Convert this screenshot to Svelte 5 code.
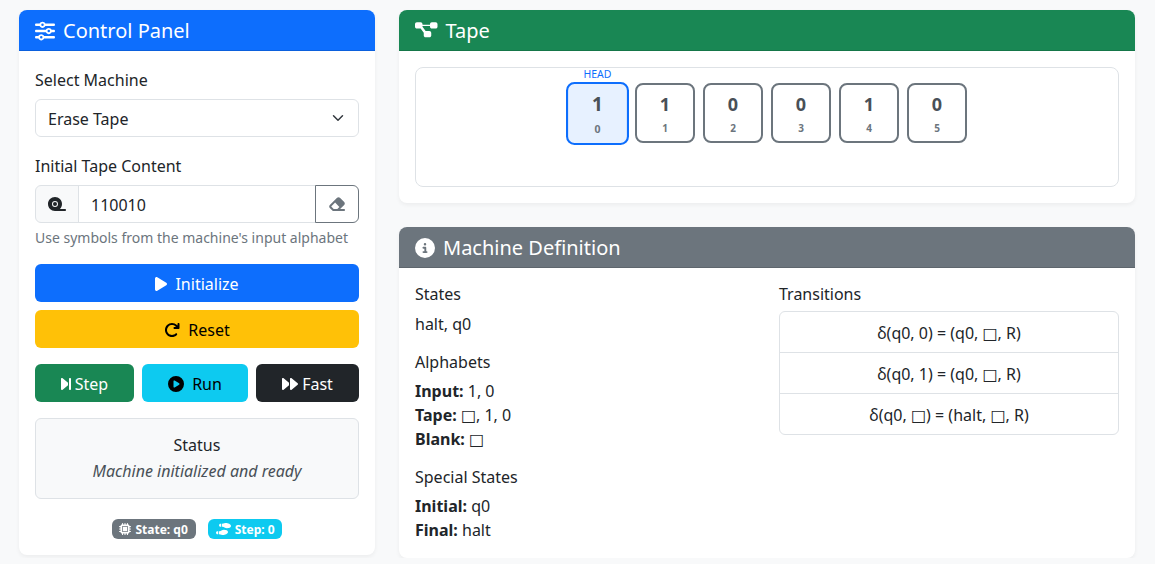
<script>
  const icons = {
    sliders: ['0 0 512 512', 'M0 416c0 17.7 14.3 32 32 32l54.7 0c12.3 28.3 40.5 48 73.3 48s61-19.7 73.3-48L480 448c17.7 0 32-14.3 32-32s-14.3-32-32-32l-246.7 0c-12.3-28.3-40.5-48-73.3-48s-61 19.7-73.3 48L32 384c-17.7 0-32 14.3-32 32zm128 0a32 32 0 1 1 64 0 32 32 0 1 1 -64 0zM320 256a32 32 0 1 1 64 0 32 32 0 1 1 -64 0zm32-80c-32.8 0-61 19.7-73.3 48L32 224c-17.7 0-32 14.3-32 32s14.3 32 32 32l246.7 0c12.3 28.3 40.5 48 73.3 48s61-19.7 73.3-48l54.7 0c17.7 0 32-14.3 32-32s-14.3-32-32-32l-54.7 0c-12.3-28.3-40.5-48-73.3-48zM192 128a32 32 0 1 1 0-64 32 32 0 1 1 0 64zm73.3-64C253 35.7 224.8 16 192 16s-61 19.7-73.3 48L32 64C14.3 64 0 78.3 0 96s14.3 32 32 32l86.7 0c12.3 28.3 40.5 48 73.3 48s61-19.7 73.3-48L480 128c17.7 0 32-14.3 32-32s-14.3-32-32-32L265.3 64z'],
    tape: ['0 0 576 512', 'M380.8 416c41.5-40.7 67.2-97.3 67.2-160C448 132.3 347.7 32 224 32S0 132.3 0 256S100.3 480 224 480H544c17.7 0 32-14.3 32-32s-14.3-32-32-32H380.8zM224 160a96 96 0 1 1 0 192 96 96 0 1 1 0-192zm64 96a64 64 0 1 0 -128 0 64 64 0 1 0 128 0z'],
    eraser: ['0 0 576 512', 'M290.7 57.4L57.4 290.7c-25 25-25 65.5 0 90.5l80 80c12 12 28.3 18.7 45.3 18.7H288h9.4H512c17.7 0 32-14.3 32-32s-14.3-32-32-32H387.9L518.6 285.3c25-25 25-65.5 0-90.5L381.3 57.4c-25-25-65.5-25-90.5 0zM297.4 416H288l-105.4 0-80-80L227.3 211.3 364.7 348.7 297.4 416z'],
    diagram: ['0 0 576 512', 'M0 80C0 53.5 21.5 32 48 32h96c26.5 0 48 21.5 48 48V96H384V80c0-26.5 21.5-48 48-48h96c26.5 0 48 21.5 48 48v64c0 26.5-21.5 48-48 48H432c-26.5 0-48-21.5-48-48V128H192v16c0 1.7-.1 3.4-.3 5L272 256h96c26.5 0 48 21.5 48 48v64c0 26.5-21.5 48-48 48H272c-26.5 0-48-21.5-48-48V304c0-1.7 .1-3.4 .3-5L144 192H48c-26.5 0-48-21.5-48-48V80z'],
    info: ['0 0 512 512', 'M256 512A256 256 0 1 0 256 0a256 256 0 1 0 0 512zM216 336h24V272H216c-13.3 0-24-10.7-24-24s10.7-24 24-24h48c13.3 0 24 10.7 24 24v88h8c13.3 0 24 10.7 24 24s-10.7 24-24 24H216c-13.3 0-24-10.7-24-24s10.7-24 24-24zm40-208a32 32 0 1 1 0 64 32 32 0 1 1 0-64z'],
    play: ['0 0 384 512', 'M73 39c-14.8-9.1-33.4-9.4-48.5-.9S0 62.6 0 80V432c0 17.4 9.4 33.4 24.5 41.9s33.7 8.1 48.5-.9L361 297c14.3-8.7 23-24.2 23-41s-8.7-32.2-23-41L73 39z'],
    redo: ['0 0 512 512', 'M386.3 160H336c-17.7 0-32 14.3-32 32s14.3 32 32 32H464c17.7 0 32-14.3 32-32V64c0-17.7-14.3-32-32-32s-32 14.3-32 32v51.2L414.4 97.6c-87.5-87.5-229.3-87.5-316.8 0s-87.5 229.3 0 316.8s229.3 87.5 316.8 0c12.5-12.5 12.5-32.8 0-45.3s-32.8-12.5-45.3 0c-62.5 62.5-163.8 62.5-226.3 0s-62.5-163.8 0-226.3s163.8-62.5 226.3 0L386.3 160z'],
    step: ['0 0 320 512', 'M52.5 440.6c-9.5 7.9-22.8 9.7-34.1 4.4S0 428.4 0 416V96C0 83.6 7.2 72.3 18.4 67s24.5-3.6 34.1 4.4L224 214.3V256v41.7L52.5 440.6zM256 352V256 128 96c0-17.7 14.3-32 32-32s32 14.3 32 32V416c0 17.7-14.3 32-32 32s-32-14.3-32-32V352z'],
    playCircle: ['0 0 512 512', 'M0 256a256 256 0 1 1 512 0A256 256 0 1 1 0 256zM188.3 147.1c-7.6 4.2-12.3 12.3-12.3 20.9V344c0 8.7 4.7 16.7 12.3 20.9s16.8 4.1 24.3-.5l144-88c7.1-4.4 11.5-12.1 11.5-20.5s-4.4-16.1-11.5-20.5l-144-88c-7.4-4.5-16.7-4.7-24.3-.5z'],
    forward: ['0 0 512 512', 'M52.5 440.6c-9.5 7.9-22.8 9.7-34.1 4.4S0 428.4 0 416V96C0 83.6 7.2 72.3 18.4 67s24.5-3.6 34.1 4.4L224 214.3V256v41.7L52.5 440.6zM256 352V256 128 96c0-12.4 7.2-23.7 18.4-29s24.5-3.6 34.1 4.4l192 160c7.3 6.1 11.5 15.1 11.5 24.6s-4.2 18.5-11.5 24.6l-192 160c-9.5 7.9-22.8 9.7-34.1 4.4s-18.4-16.6-18.4-29V352z'],
    chip: ['0 0 512 512', 'M176 24c0-13.3-10.7-24-24-24s-24 10.7-24 24V64c-35.3 0-64 28.7-64 64H24c-13.3 0-24 10.7-24 24s10.7 24 24 24H64v56H24c-13.3 0-24 10.7-24 24s10.7 24 24 24H64v56H24c-13.3 0-24 10.7-24 24s10.7 24 24 24H64c0 35.3 28.7 64 64 64v40c0 13.3 10.7 24 24 24s24-10.7 24-24V448h56v40c0 13.3 10.7 24 24 24s24-10.7 24-24V448h56v40c0 13.3 10.7 24 24 24s24-10.7 24-24V448c35.3 0 64-28.7 64-64h40c13.3 0 24-10.7 24-24s-10.7-24-24-24H448V280h40c13.3 0 24-10.7 24-24s-10.7-24-24-24H448V176h40c13.3 0 24-10.7 24-24s-10.7-24-24-24H448c0-35.3-28.7-64-64-64V24c0-13.3-10.7-24-24-24s-24 10.7-24 24V64H280V24c0-13.3-10.7-24-24-24s-24 10.7-24 24V64H176V24zM160 128H352c17.7 0 32 14.3 32 32V352c0 17.7-14.3 32-32 32H160c-17.7 0-32-14.3-32-32V160c0-17.7 14.3-32 32-32zm192 32H160V352H352V160z'],
    shoes: ['0 0 640 512', 'M192 160h32V32h-32c-35.35 0-64 28.65-64 64s28.65 64 64 64zM0 416c0 35.35 28.65 64 64 64h32V352H64c-35.35 0-64 28.65-64 64zm337.46-128c-34.91 0-76.16 13.12-104.73 32-24.79 16.38-44.52 32-104.73 32v128l57.53 15.97c26.21 7.28 53.01 13.12 80.31 15.05 32.69 2.31 65.6.67 97.58-6.2C472.9 481.3 512 429.22 512 384c0-64-84.18-96-174.54-96zM491.42 7.19C459.44.32 426.53-1.33 393.84.99c-27.3 1.93-54.1 7.77-80.31 15.04L256 32v128c60.2 0 79.94 15.62 104.73 32 28.57 18.88 69.82 32 104.73 32C555.82 224 640 192 640 128c0-45.22-39.1-97.3-148.58-120.81z']
  };

  const tape = ['1', '1', '0', '0', '1', '0'];
  const transitions = [
    ['δ(q0, 0) = (q0, ', ', R)'],
    ['δ(q0, 1) = (q0, ', ', R)'],
    ['δ(q0, ', ') = (halt, ', ', R)']
  ];
</script>

{#snippet icon(name)}
  <svg class="icon" viewBox={icons[name][0]} aria-hidden="true"><path d={icons[name][1]} /></svg>
{/snippet}

{#snippet blank()}<span class="blank">□</span>{/snippet}

<div class="page">
  <section class="card left">
    <h5 class="card-header primary">{@render icon('sliders')}<span>Control Panel</span></h5>
    <div class="card-body">
      <label class="form-label" for="machine">Select Machine</label>
      <select id="machine" class="form-select">
        <option>Erase Tape</option>
      </select>

      <label class="form-label" for="tape">Initial Tape Content</label>
      <div class="input-group">
        <span class="addon">{@render icon('tape')}</span>
        <input id="tape" type="text" value="110010" />
        <button class="clear" type="button">{@render icon('eraser')}</button>
      </div>
      <div class="form-text">Use symbols from the machine's input alphabet</div>

      <div class="stack">
        <button class="btn btn-primary" type="button">{@render icon('play')}<span class="gap-8">Initialize</span></button>
        <button class="btn btn-warning" type="button">{@render icon('redo')}<span class="gap-8">Reset</span></button>
      </div>

      <div class="controls">
        <button class="btn btn-success" type="button">{@render icon('step')}<span class="gap-4">Step</span></button>
        <button class="btn btn-info" type="button">{@render icon('playCircle')}<span class="gap-8">Run</span></button>
        <button class="btn btn-dark" type="button">{@render icon('forward')}<span class="gap-4">Fast</span></button>
      </div>

      <div class="status">
        <h6>Status</h6>
        <div class="status-text">Machine initialized and ready</div>
      </div>

      <div class="badges">
        <span class="badge bg-secondary">{@render icon('chip')} State: q0</span>
        <span class="badge bg-info">{@render icon('shoes')} Step: 0</span>
      </div>
    </div>
  </section>

  <div class="right">
    <section class="card">
      <h5 class="card-header success">{@render icon('diagram')}<span>Tape</span></h5>
      <div class="card-body">
        <div class="tape">
          {#each tape as value, i}
            <div class="cell" class:head={i === 0}>
              {#if i === 0}<span class="head-label">HEAD</span>{/if}
              <div class="value">{value}</div>
              <div class="index">{i}</div>
            </div>
          {/each}
        </div>
      </div>
    </section>

    <section class="card">
      <h5 class="card-header secondary">{@render icon('info')}<span>Machine Definition</span></h5>
      <div class="card-body definition">
        <div>
          <h6>States</h6>
          <p>halt, q0</p>
          <h6>Alphabets</h6>
          <p><strong>Input:</strong> 1, 0<br /><strong>Tape:</strong> {@render blank()}, 1, 0<br /><strong>Blank:</strong> {@render blank()}</p>
          <h6>Special States</h6>
          <p><strong>Initial:</strong> q0<br /><strong>Final:</strong> halt</p>
        </div>
        <div>
          <h6>Transitions</h6>
          <ul class="list">
            {#each transitions as parts}
              <li>
                {#each parts as part, i}{#if i > 0}{@render blank()}{/if}{part}{/each}
              </li>
            {/each}
          </ul>
        </div>
      </div>
    </section>
  </div>
</div>

<style>
  :global(body) {
    margin: 0;
    background: #f8f9fa;
    color: #212529;
    font-family: "Noto Sans", sans-serif;
    font-size: 16px;
    line-height: 1.5;
  }

  * {
    box-sizing: border-box;
  }

  .page {
    display: grid;
    grid-template-columns: 356px 736px;
    gap: 24px;
    align-items: start;
    padding: 10px 20px 0 19px;
  }

  .right {
    display: flex;
    flex-direction: column;
    gap: 24px;
  }

  .card {
    background: #fff;
    border-radius: 8px;
    box-shadow: 0 2px 4px rgba(0, 0, 0, 0.05);
    overflow: hidden;
  }

  .card-header {
    display: flex;
    align-items: center;
    gap: 8px;
    margin: 0;
    padding: 9px 16px 7px;
    color: #fff;
    font-size: 20px;
    font-weight: 400;
    line-height: 24px;
    border-bottom: 1px solid rgba(0, 0, 0, 0.125);
  }

  .primary { background: #0d6efd; }
  .success { background: #198754; }
  .secondary { background: #6c757d; }

  .card-body {
    padding: 16px;
  }

  .icon {
    display: inline-block;
    height: 1em;
    width: auto;
    fill: currentColor;
    vertical-align: -0.125em;
  }

  .blank {
    font-family: "DejaVu Sans", sans-serif;
    font-weight: 400;
    line-height: 1;
  }

  .form-label {
    display: block;
    margin-bottom: 7.5px;
    padding-top: 0.5px;
  }

  .form-select {
    display: block;
    width: 100%;
    height: 38px;
    margin-bottom: 16px;
    padding: 7px 36px 5px 12px;
    border: 1px solid #dee2e6;
    border-radius: 6px;
    background: #fff url("data:image/svg+xml,%3csvg xmlns='http://www.w3.org/2000/svg' viewBox='0 0 16 16'%3e%3cpath fill='none' stroke='%23343a40' stroke-linecap='round' stroke-linejoin='round' stroke-width='2' d='m2 5 6 6 6-6'/%3e%3c/svg%3e") no-repeat right 12px center / 16px 12px;
    color: #212529;
    font: inherit;
    appearance: none;
  }

  .input-group {
    display: flex;
    height: 38px;
  }

  .addon {
    display: flex;
    align-items: center;
    justify-content: center;
    width: 44px;
    border: 1px solid #dee2e6;
    border-radius: 6px 0 0 6px;
    background: #f8f9fa;
  }

  .input-group input {
    flex: 1;
    min-width: 0;
    margin-left: -1px;
    padding: 7px 12px 5px;
    border: 1px solid #dee2e6;
    color: #212529;
    font: inherit;
    outline: none;
  }

  .clear {
    width: 44px;
    margin-left: -1px;
    padding: 0;
    border: 1px solid #6c757d;
    border-radius: 0 6px 6px 0;
    background: #fff;
    color: #6c757d;
    font: inherit;
  }

  .form-text {
    margin-top: 4px;
    color: #6c757d;
    font-size: 14px;
  }

  .stack {
    display: flex;
    flex-direction: column;
    gap: 8px;
    margin-top: 16px;
  }

  .controls {
    display: grid;
    grid-template-columns: 99px 106px 103px;
    gap: 8px;
    margin-top: 16px;
  }

  .btn {
    height: 38px;
    padding: 7px 12px 5px;
    border: 1px solid transparent;
    border-radius: 6px;
    font: inherit;
    white-space: nowrap;
  }

  .btn-primary { background: #0d6efd; color: #fff; }
  .btn-warning { background: #ffc107; color: #000; }
  .btn-success { background: #198754; color: #fff; }
  .btn-info { background: #0dcaf0; color: #000; }
  .btn-dark { background: #212529; color: #fff; }

  .gap-4 { margin-left: 4px; }
  .gap-8 { margin-left: 8px; }

  .status {
    margin-top: 16px;
    padding: 16px;
    border: 1px solid #dee2e6;
    border-radius: 6px;
    background: #f8f9fa;
    text-align: center;
  }

  h6 {
    margin: 0 0 7px;
    padding-top: 1px;
    font-size: 16px;
    font-weight: 400;
    line-height: 1.2;
  }

  .status h6 {
    margin-bottom: 4px;
  }

  .status-text {
    margin-bottom: -1px;
    color: #495057;
    font-style: italic;
  }

  .badges {
    margin-top: 16px;
    text-align: center;
  }

  .badge {
    display: inline-block;
    padding: 4.2px 7.8px;
    border-radius: 6px;
    color: #fff;
    font-size: 12px;
    font-weight: 700;
    line-height: 1;
  }

  .badge .icon {
    margin-right: 1px;
  }

  .badge + .badge {
    margin-left: 8px;
  }

  .bg-secondary { background: #6c757d; }
  .bg-info { background: #0dcaf0; }

  .tape {
    display: flex;
    justify-content: center;
    align-items: flex-start;
    min-height: 120px;
    padding: 15px 0;
    border: 1px solid #dee2e6;
    border-radius: 8px;
  }

  .cell {
    position: relative;
    display: flex;
    flex-direction: column;
    align-items: center;
    justify-content: center;
    width: 60px;
    height: 60px;
    margin: 0 4px;
    border: 2px solid #6c757d;
    border-radius: 8px;
    background: #fff;
  }

  .cell.head {
    border-color: #0d6efd;
    background: #e7f1ff;
    transform: translate(0.5px, 0.5px) scale(1.05);
  }

  .head-label {
    position: absolute;
    top: -17px;
    left: 0;
    right: 0;
    color: #0d6efd;
    font-size: 10px;
    line-height: 15px;
    text-align: center;
  }

  .value {
    color: #495057;
    font-size: 18px;
    font-weight: 700;
    line-height: 27px;
  }

  .index {
    margin-top: 3px;
    color: #6c757d;
    font-size: 10px;
    font-weight: 700;
    line-height: 15px;
  }

  .definition {
    display: grid;
    grid-template-columns: 340px 340px;
    gap: 24px;
  }

  .definition p {
    margin: 0 0 15.5px;
    padding-top: 0.5px;
  }

  .definition p + h6 {
    margin-bottom: 6px;
    padding-top: 2px;
  }

  .definition p:last-child {
    margin-bottom: 0;
  }

  .list {
    margin: 0;
    padding: 0;
    border: 1px solid #dee2e6;
    border-radius: 6px;
    list-style: none;
  }

  .list li {
    height: 40px;
    padding: 8.5px 16px 0;
    text-align: center;
  }

  .list li + li {
    height: 41px;
    border-top: 1px solid #dee2e6;
  }
</style>
